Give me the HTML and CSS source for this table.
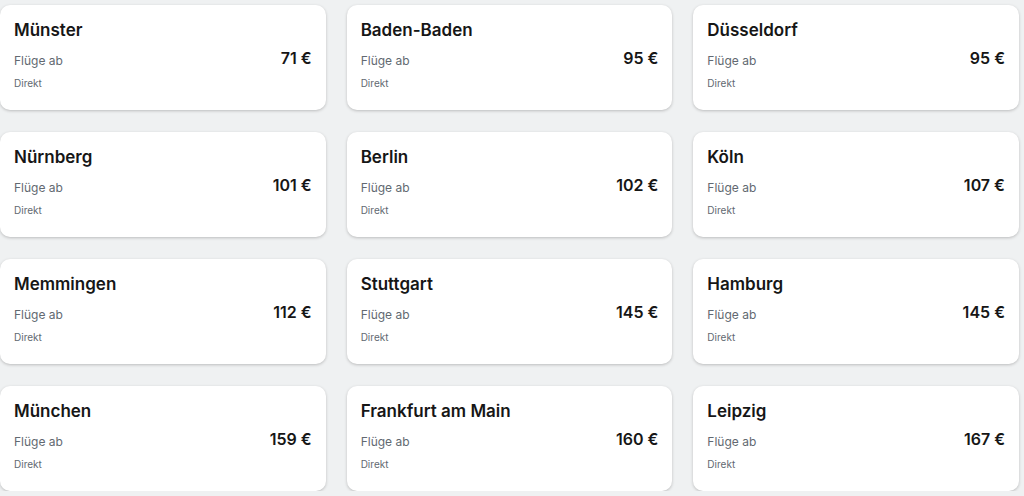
FILE: index.html
```html
<!DOCTYPE html>
<html>
	<head>
		<meta charset="utf-8">
		<link rel="stylesheet" href="styles.css">
	</head>
	<body>
		<section class="grid">
			<div class="card">
				<div class="city">Münster</div>
				<div class="row"><span class="label">Flüge ab</span><span class="price">71 €</span></div>
				<div class="direct">Direkt</div>
			</div>
			<div class="card">
				<div class="city">Baden-Baden</div>
				<div class="row"><span class="label">Flüge ab</span><span class="price">95 €</span></div>
				<div class="direct">Direkt</div>
			</div>
			<div class="card">
				<div class="city">Düsseldorf</div>
				<div class="row"><span class="label">Flüge ab</span><span class="price">95 €</span></div>
				<div class="direct">Direkt</div>
			</div>
			<div class="card">
				<div class="city">Nürnberg</div>
				<div class="row"><span class="label">Flüge ab</span><span class="price">101 €</span></div>
				<div class="direct">Direkt</div>
			</div>
			<div class="card">
				<div class="city">Berlin</div>
				<div class="row"><span class="label">Flüge ab</span><span class="price">102 €</span></div>
				<div class="direct">Direkt</div>
			</div>
			<div class="card">
				<div class="city">Köln</div>
				<div class="row"><span class="label">Flüge ab</span><span class="price">107 €</span></div>
				<div class="direct">Direkt</div>
			</div>
			<div class="card">
				<div class="city">Memmingen</div>
				<div class="row"><span class="label">Flüge ab</span><span class="price">112 €</span></div>
				<div class="direct">Direkt</div>
			</div>
			<div class="card">
				<div class="city">Stuttgart</div>
				<div class="row"><span class="label">Flüge ab</span><span class="price">145 €</span></div>
				<div class="direct">Direkt</div>
			</div>
			<div class="card">
				<div class="city">Hamburg</div>
				<div class="row"><span class="label">Flüge ab</span><span class="price">145 €</span></div>
				<div class="direct">Direkt</div>
			</div>
			<div class="card">
				<div class="city">München</div>
				<div class="row"><span class="label">Flüge ab</span><span class="price">159 €</span></div>
				<div class="direct">Direkt</div>
			</div>
			<div class="card">
				<div class="city">Frankfurt am Main</div>
				<div class="row"><span class="label">Flüge ab</span><span class="price">160 €</span></div>
				<div class="direct">Direkt</div>
			</div>
			<div class="card">
				<div class="city">Leipzig</div>
				<div class="row"><span class="label">Flüge ab</span><span class="price">167 €</span></div>
				<div class="direct">Direkt</div>
			</div>
		</section>
	</body>
</html>
```

FILE: styles.css
```css
body {
	margin: 0;
	background-color: #eff1f2;
	font-family: Inter, "Noto Sans", sans-serif;
	color: #161616;
	overflow: hidden;
}

.grid {
	display: grid;
	grid-template-columns: repeat(3, 1fr);
	grid-auto-rows: 105px;
	column-gap: 21px;
	row-gap: 22px;
	padding: 5px 5px 0 0;
}

.card {
	background-color: #ffffff;
	border-radius: 10px;
	box-shadow: 0 1px 3px rgba(37, 32, 31, 0.25);
	padding: 13px 14px 0 14px;
}

.city {
	font-size: 17px;
	font-weight: 600;
	line-height: 24px;
}

.row {
	display: flex;
	justify-content: space-between;
	align-items: center;
	margin-top: 5px;
	height: 24px;
}

.label {
	font-size: 12px;
	color: #626971;
	padding-top: 3px;
}

.price {
	font-size: 16px;
	font-weight: 600;
	margin-top: -2px;
}

.direct {
	font-size: 10px;
	color: #626971;
	margin-top: 6px;
}
```
